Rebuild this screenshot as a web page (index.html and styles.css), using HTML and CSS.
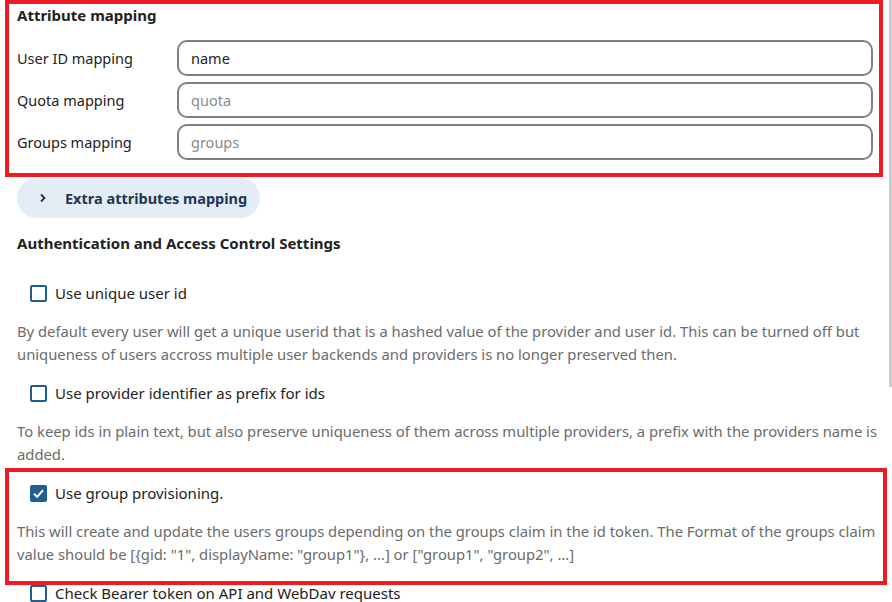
FILE: index.html
```html
<!DOCTYPE html>
<html lang="en">
<head>
  <meta charset="UTF-8">
  <meta name="viewport" content="width=device-width, initial-scale=1.0">
  <title>OIDC settings</title>
  <link rel="stylesheet" href="styles.css">
</head>
<body>
  <div id="settings">
    <h3 class="section-title first">Attribute mapping</h3>
    <div class="field-row">
      <label for="uid-map">User ID mapping</label>
      <input id="uid-map" type="text" value="name">
    </div>
    <div class="field-row">
      <label for="quota-map">Quota mapping</label>
      <input id="quota-map" type="text" placeholder="quota">
    </div>
    <div class="field-row">
      <label for="groups-map">Groups mapping</label>
      <input id="groups-map" type="text" placeholder="groups">
    </div>

    <button class="expander">
      <span class="chevron">
        <svg width="10" height="10" viewBox="0 0 10 10"><path d="M3 1.5 L6.5 5 L3 8.5" fill="none" stroke="#1e3553" stroke-width="1.8"/></svg>
      </span>
      Extra attributes mapping
    </button>

    <h3 class="section-title">Authentication and Access Control Settings</h3>

    <div class="option">
      <label class="check"><span class="box"></span>Use unique user id</label>
      <p class="hint">By default every user will get a unique userid that is a hashed value of the provider and user id. This can be turned off but uniqueness of users accross multiple user backends and providers is no longer preserved then.</p>
    </div>

    <div class="option">
      <label class="check"><span class="box"></span>Use provider identifier as prefix for ids</label>
      <p class="hint">To keep ids in plain text, but also preserve uniqueness of them across multiple providers, a prefix with the providers name is added.</p>
    </div>

    <div class="option">
      <label class="check"><span class="box checked"><svg width="13" height="13" viewBox="0 0 13 13"><path d="M2 6.8 L5.2 9.8 L11 3.2" fill="none" stroke="#fff" stroke-width="2"/></svg></span>Use group provisioning.</label>
      <p class="hint">This will create and update the users groups depending on the groups claim in the id token. The Format of the groups claim value should be [{gid: "1", displayName: "group1"}, ...] or ["group1", "group2", ...]</p>
    </div>

    <div class="option">
      <label class="check"><span class="box"></span>Check Bearer token on API and WebDav requests</label>
    </div>
  </div>

  <div class="mark mark-top"></div>
  <div class="mark mark-bottom"></div>
  <div class="scroll-thumb"></div>
</body>
</html>
```

FILE: styles.css
```css
body {
  margin: 0;
  font-family: "Noto Sans", "Noto Sans CJK KR", sans-serif;
  font-size: 15px;
  color: #222;
  background: #fff;
  overflow: hidden;
}

#settings {
  padding: 4px 17px 0 17px;
}

.section-title {
  margin: 14px 0 22px;
  font-size: 15px;
  line-height: 22px;
  font-weight: 700;
}

.section-title.first {
  margin: 0 0 14px;
}

.field-row {
  display: flex;
  align-items: center;
  margin-bottom: 6px;
  font-size: 14.5px;
}

.field-row label {
  width: 160px;
  flex-shrink: 0;
}

.field-row input {
  flex: 1;
  height: 36px;
  margin-right: 2px;
  box-sizing: border-box;
  border: 2px solid #808080;
  border-radius: 10px;
  padding: 0 12px;
  font: inherit;
  color: #222;
}

.field-row input::placeholder {
  color: #8a8a8a;
}

.expander {
  display: flex;
  align-items: center;
  margin-top: 18px;
  height: 40px;
  width: 243px;
  padding: 0 0 0 21px;
  border: none;
  border-radius: 20px;
  background: #e4edf5;
  color: #1e3553;
  font: inherit;
  font-size: 14.5px;
  font-weight: 700;
}

.chevron {
  display: inline-flex;
  width: 27px;
}

.option {
  margin-bottom: 10px;
}

.check {
  display: flex;
  align-items: center;
  height: 34px;
  padding-left: 13px;
}

.box {
  display: inline-flex;
  align-items: center;
  justify-content: center;
  width: 17px;
  height: 17px;
  box-sizing: border-box;
  border: 2px solid #1f5f96;
  border-radius: 2px;
  margin-right: 8px;
}

.box.checked {
  background: #1f5f96;
}

.hint {
  margin: 10px -12px 0 0;
  font-size: 14.8px;
  line-height: 23px;
  color: #6b6b6b;
}

.mark {
  position: absolute;
  border: 4px solid #ed1c24;
  box-sizing: border-box;
}

.mark-top {
  left: 5px;
  top: 0;
  width: 878px;
  height: 177px;
}

.mark-bottom {
  left: 5px;
  top: 468px;
  width: 882px;
  height: 117px;
}

.scroll-thumb {
  position: absolute;
  right: 0;
  top: 0;
  width: 3px;
  height: 387px;
  background: #cdcdcd;
}
```
